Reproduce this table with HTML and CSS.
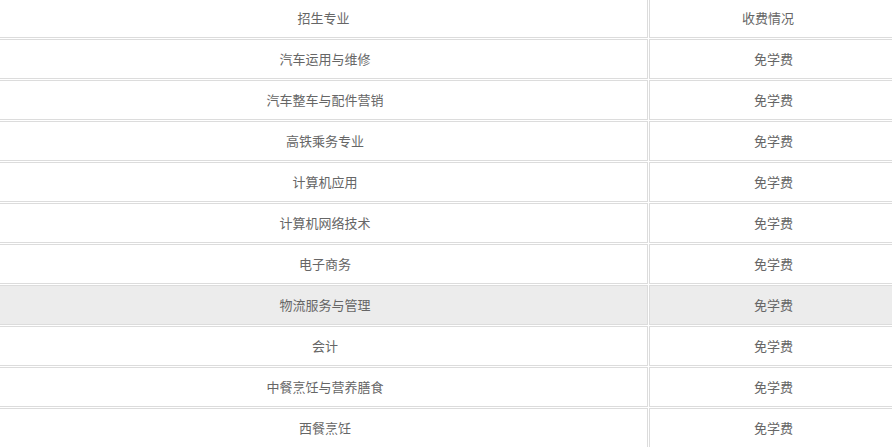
FILE: index.html
```html
<!DOCTYPE html>
<html lang="zh-CN">
<head>
<meta charset="utf-8">
<title>招生专业</title>
<link rel="stylesheet" href="styles.css">
</head>
<body>
<table class="fees">
  <colgroup><col class="col-major"><col class="col-fee"></colgroup>
  <thead>
    <tr><th class="h-major">招生专业</th><th class="h-fee">收费情况</th></tr>
  </thead>
  <tbody>
    <tr><td class="major">汽车运用与维修</td><td class="fee">免学费</td></tr>
    <tr><td class="major">汽车整车与配件营销</td><td class="fee">免学费</td></tr>
    <tr><td class="major">高铁乘务专业</td><td class="fee">免学费</td></tr>
    <tr><td class="major">计算机应用</td><td class="fee">免学费</td></tr>
    <tr><td class="major">计算机网络技术</td><td class="fee">免学费</td></tr>
    <tr><td class="major">电子商务</td><td class="fee">免学费</td></tr>
    <tr class="is-hover"><td class="major">物流服务与管理</td><td class="fee">免学费</td></tr>
    <tr><td class="major">会计</td><td class="fee">免学费</td></tr>
    <tr><td class="major">中餐烹饪与营养膳食</td><td class="fee">免学费</td></tr>
    <tr><td class="major">西餐烹饪</td><td class="fee">免学费</td></tr>
  </tbody>
</table>
</body>
</html>
```
FILE: styles.css
```css
html, body {
  margin: 0;
  padding: 0;
  overflow: hidden;
  background: #fff;
}
body {
  font-family: "Noto Sans CJK SC", "Noto Sans", sans-serif;
  font-size: 13px;
  color: #666;
}
.fees {
  border-collapse: separate;
  border-spacing: 1px;
  table-layout: fixed;
  width: 901px;
  margin: -3px 0 0 -2px;
}
.col-major { width: 649px; }
.col-fee { width: 249px; }
.fees th,
.fees td {
  border: 1px solid #dcdcdc;
  padding: 0 0 1px 0;
  line-height: 37px;
  text-align: center;
  font-weight: normal;
  white-space: nowrap;
}
.fees .h-fee { padding-right: 11px; }
.fees .major { padding-left: 3px; }
.is-hover td { background: #ececec; }
```
